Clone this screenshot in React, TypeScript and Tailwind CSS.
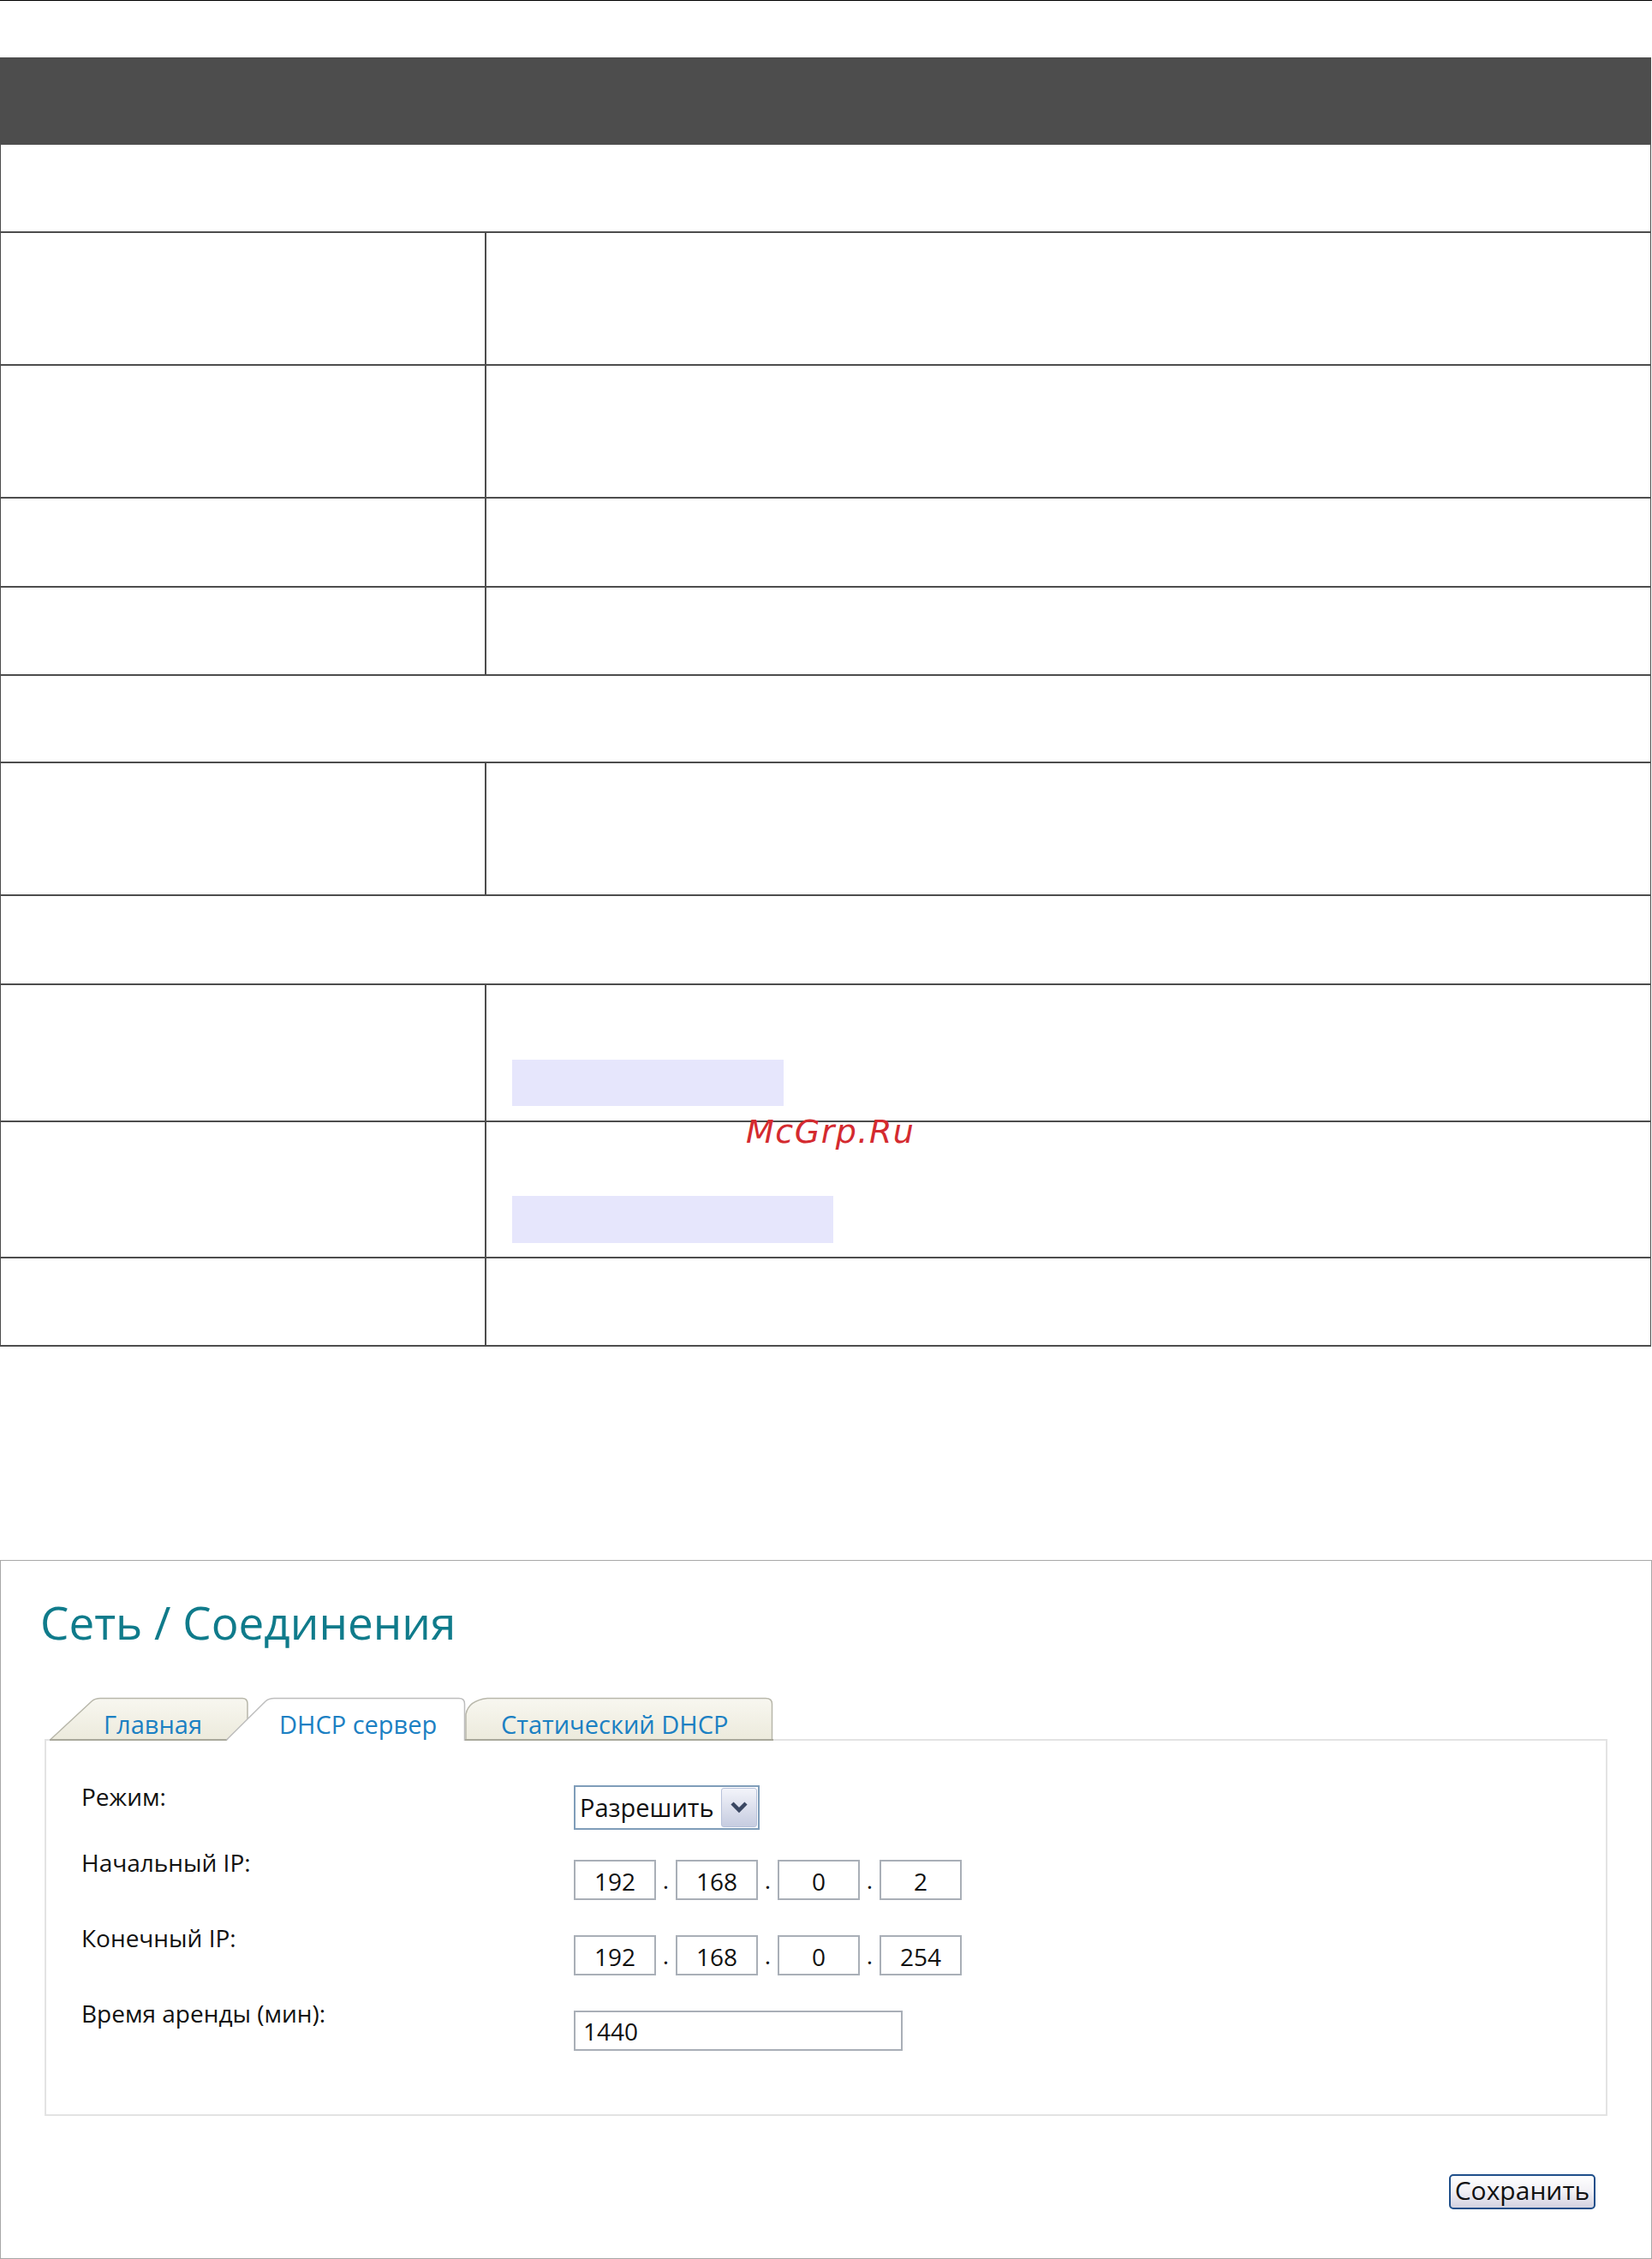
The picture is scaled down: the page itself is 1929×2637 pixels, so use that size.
import React from "react";

const LINE = "border-[#4d4d4d]";

function SectionRow({ h }: { h: string }) {
  return <div className={`${h} border-b-2 ${LINE}`} />;
}

function Row({ h, box }: { h: string; box?: React.ReactNode }) {
  return (
    <div className={`${h} flex border-b-2 ${LINE}`}>
      <div className={`w-[567px] shrink-0 border-r-2 ${LINE}`} />
      <div className="flex-1 pl-[30px]">{box}</div>
    </div>
  );
}

function Chevron() {
  return (
    <svg width="40" height="44" viewBox="0 0 40 44" className="block">
      <path d="M12 17 L20 25 L28 17" fill="none" stroke="#3a4762" strokeWidth="4.5" strokeLinecap="butt" strokeLinejoin="miter" />
    </svg>
  );
}

function IpField({ values }: { values: string[] }) {
  return (
    <div className="flex items-start">
      {values.map((v, i) => (
        <React.Fragment key={i}>
          {i > 0 && (
            <div className="w-[23px] h-[47px] pt-[7px] text-center leading-[32px] text-[28px] text-[#111]">.</div>
          )}
          <div className="w-[96px] h-[47px] border-2 border-[#a9afb7] bg-white pt-[7px] text-center text-[28px] leading-[32px] text-[#111]">
            {v}
          </div>
        </React.Fragment>
      ))}
    </div>
  );
}

function Tabs() {
  return (
    <div className="relative z-10 ml-[6px] mt-[61px] -mb-[2px] flex h-[51px]">
      <div className="relative h-[51px] w-[232px]">
        <svg className="absolute inset-0" width="232" height="51" viewBox="0 0 232 51">
          <defs>
            <linearGradient id="cream1" x1="0" y1="0" x2="0" y2="1">
              <stop offset="0" stopColor="#f8f7f0" />
              <stop offset="1" stopColor="#eceadc" />
            </linearGradient>
          </defs>
          <path d="M0.5 50 L49 5 Q53 1.5 59 1.5 L225 1.5 Q231 1.5 231 8 L231 50 Z" fill="url(#cream1)" stroke="#b8b7aa" strokeWidth="1.5" />
          <rect x="0" y="49" width="232" height="2" fill="#a9a89b" />
        </svg>
        <span className="relative block pl-[63px] pt-[16px] text-[29px] leading-[32px] text-[#1b80c3]">Главная</span>
      </div>
      <div className="relative -ml-[26px] h-[51px] w-[280px]">
        <svg className="absolute inset-0" width="280" height="51" viewBox="0 0 280 51">
          <path d="M0.5 51 L46 5 Q50 1.5 56 1.5 L272 1.5 Q278.5 1.5 278.5 8 L278.5 51 Z" fill="#ffffff" stroke="none" />
          <path d="M0.5 50 L46 5 Q50 1.5 56 1.5 L272 1.5 Q278.5 1.5 278.5 8 L278.5 51" fill="none" stroke="#bdbdbd" strokeWidth="1.5" />
        </svg>
        <span className="relative block pl-[62px] pt-[16px] text-[29px] leading-[32px] text-[#1b80c3]">DHCP сервер</span>
      </div>
      <div className="relative -ml-[1px] h-[51px] w-[360px]">
        <svg className="absolute inset-0" width="360" height="51" viewBox="0 0 360 51">
          <defs>
            <linearGradient id="cream3" x1="0" y1="0" x2="0" y2="1">
              <stop offset="0" stopColor="#f8f7f0" />
              <stop offset="1" stopColor="#eceadc" />
            </linearGradient>
          </defs>
          <path d="M1 50 L1 20 Q4 4 26 1.5 L351 1.5 Q358.5 1.5 358.5 8 L358.5 50 Z" fill="url(#cream3)" stroke="#b8b7aa" strokeWidth="1.5" />
          <rect x="0" y="49" width="360" height="2" fill="#a9a89b" />
        </svg>
        <span className="relative block pl-[42px] pt-[16px] text-[29px] leading-[32px] text-[#1b80c3]">Статический DHCP</span>
      </div>
    </div>
  );
}

function Panel() {
  return (
    <div className="mt-[249px] h-[816px] w-[1929px] border border-[#a8a8a8] px-[51px] pt-[45px]">
      <div className="-ml-[5px] text-[53px] leading-[53px] text-[#0f7b8b]">Сеть / Соединения</div>
      <Tabs />
      <div className="border-2 border-[#e3e3e3] pb-[74px] pl-[41px] pt-[52px] text-[28px] leading-[32px] text-[#111]">
        {/* Режим */}
        <div className="flex items-start">
          <div className="-mt-[3px] w-[575px] shrink-0">Режим:</div>
          <div className="flex h-[52px] w-[217px] border-2 border-[#7f9db9] bg-white">
            <div className="flex-1 pl-[5px] pt-[8px] text-[29px]">Разрешить</div>
            <div className="my-[1px] mr-[1px] w-[42px] rounded-[3px] border border-[#b7c1da] bg-gradient-to-b from-[#f3f4fa] to-[#c6cce0]">
              <Chevron />
            </div>
          </div>
        </div>
        {/* Начальный IP */}
        <div className="mt-[35px] flex items-start">
          <div className="-mt-[13px] w-[575px] shrink-0">Начальный IP:</div>
          <IpField values={["192", "168", "0", "2"]} />
        </div>
        {/* Конечный IP */}
        <div className="mt-[41px] flex items-start">
          <div className="-mt-[13px] w-[575px] shrink-0">Конечный IP:</div>
          <IpField values={["192", "168", "0", "254"]} />
        </div>
        {/* Время аренды */}
        <div className="mt-[41px] flex items-start">
          <div className="-mt-[13px] w-[575px] shrink-0">Время аренды (мин):</div>
          <div className="h-[47px] w-[384px] border-2 border-[#a9afb7] bg-white pl-[9px] pt-[6px]">1440</div>
        </div>
      </div>
      <div className="mt-[68px] flex justify-end pr-[14px]">
        <div className="h-[41px] w-[171px] rounded-[5px] border-2 border-[#1f4f8a] bg-gradient-to-b from-[#ffffff] via-[#f1f0f5] to-[#d3d1e0] pt-[1px] text-center text-[30px] leading-[32px] text-[#111]">
          Сохранить
        </div>
      </div>
    </div>
  );
}

export default function App() {
  return (
    <div className="relative h-[2637px] w-[1929px] overflow-hidden bg-white [font-family:'Open_Sans',sans-serif]">
      <div className="h-px w-full bg-black" />
      <div className="mt-[66px] w-[1928px]">
        <div className="h-[102px] bg-[#4d4d4d]" />
        <div className={`border-x ${LINE}`}>
          <SectionRow h="h-[103px]" />
          <Row h="h-[155px]" />
          <Row h="h-[155px]" />
          <Row h="h-[104px]" />
          <Row h="h-[103px]" />
          <SectionRow h="h-[102px]" />
          <Row h="h-[155px]" />
          <SectionRow h="h-[104px]" />
          <Row
            h="h-[160px]"
            box={<div className="mt-[87px] h-[54px] w-[317px] bg-[#e6e6fc]" />}
          />
          <Row
            h="h-[159px]"
            box={<div className="mt-[86px] h-[55px] w-[375px] bg-[#e6e6fc]" />}
          />
          <Row h="h-[103px]" />
        </div>
      </div>
      <Panel />
      <div className="absolute left-[871px] top-[1302px] z-20 text-[38px] italic leading-[38px] tracking-[1.5px] text-[#d42a2f] [font-family:'DejaVu_Sans',sans-serif]">
        McGrp.Ru
      </div>
    </div>
  );
}
